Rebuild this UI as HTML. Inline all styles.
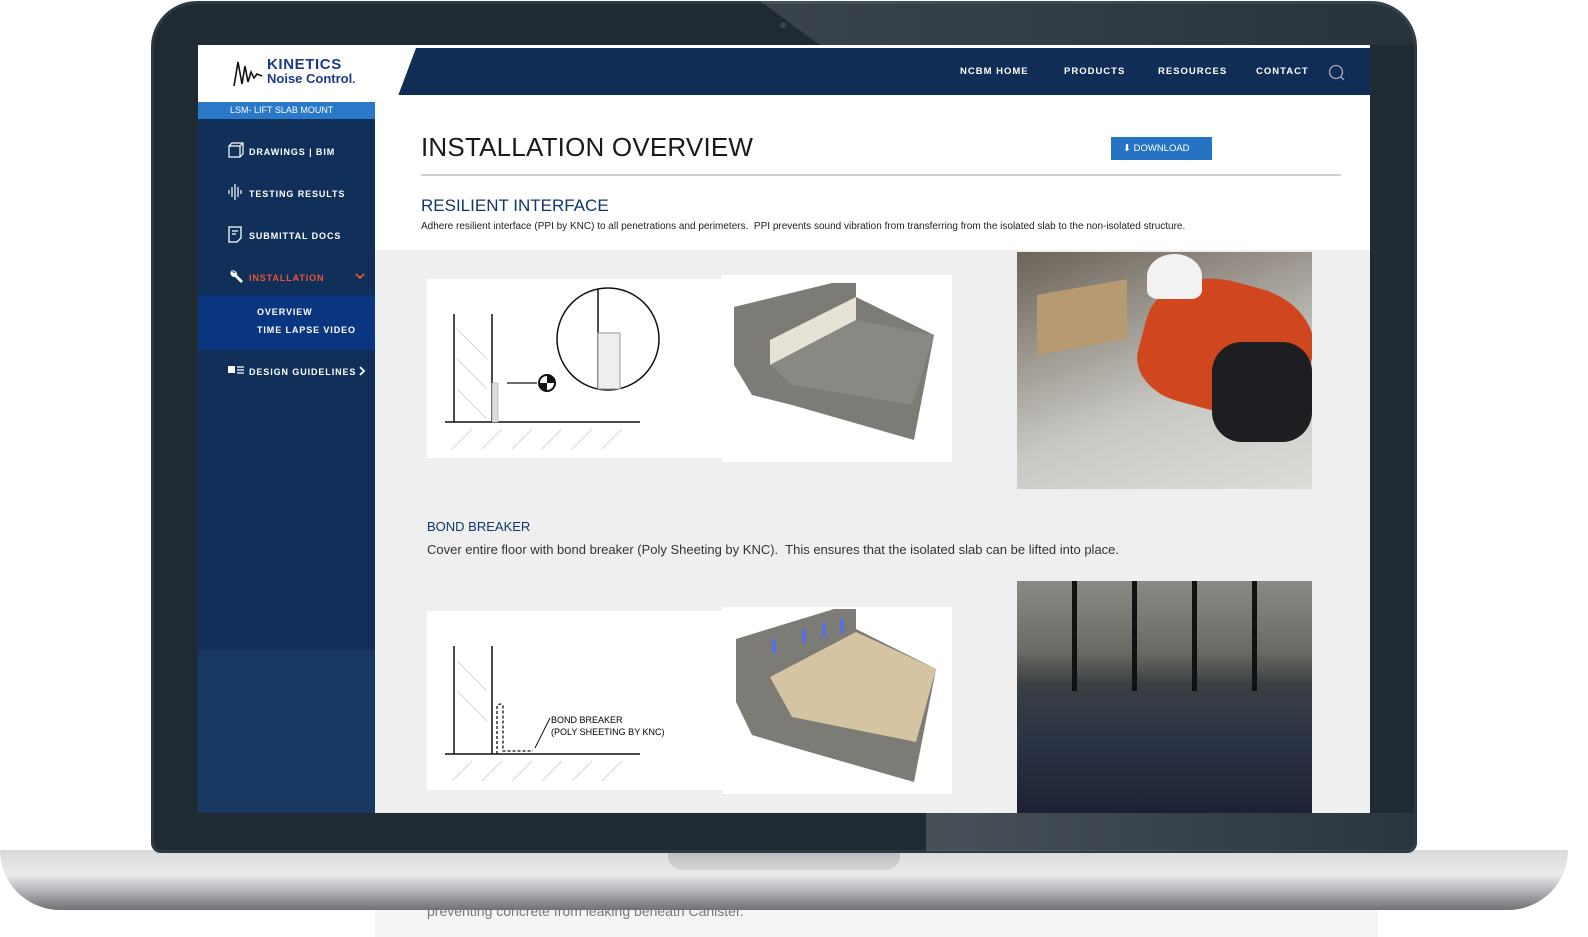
<!DOCTYPE html>
<html><head><meta charset="utf-8"><style>
*{margin:0;padding:0;box-sizing:border-box}
body{width:1588px;height:937px;background:#fff;position:relative;overflow:hidden;font-family:"Liberation Sans",sans-serif}
.abs{position:absolute}
.bezel{left:151px;top:1px;width:1266px;height:852px;background:#1f2a33;border-radius:46px 46px 10px 10px;border:3px solid #2d3a46}
.screen{left:198px;top:45px;width:1172px;height:768px;background:#efefef;overflow:hidden}
.nav a{position:absolute;top:21px;color:#fff;font-size:9.5px;font-weight:bold;letter-spacing:1px}
.side{color:#fff;font-size:9px;font-weight:bold;letter-spacing:.9px}
.side div{position:absolute;left:51px}
.ico{position:absolute;left:30px}
</style></head><body>
<div class="abs" style="left:375px;top:895px;width:1003px;height:42px;background:#f4f4f4"></div>
<div class="abs" style="left:427px;top:903px;font-size:14px;color:#777">preventing concrete from leaking beneath Canister.</div>
<div class="abs" style="left:0;top:850px;width:1568px;height:60px;border-radius:0 0 60px 60px;background:linear-gradient(#d9dadc 0%,#e8e9eb 40%,#c4c5c8 60%,#8e9095 85%,#6e7075 100%)"></div>
<div class="abs" style="left:668px;top:850px;width:232px;height:20px;border-radius:0 0 14px 14px;background:linear-gradient(#b8babd,#d5d6d8)"></div>
<div class="abs bezel"></div>
<div class="abs" style="left:780px;top:22px;width:6px;height:6px;border-radius:50%;background:#3a4650"></div>
<div class="abs screen">
  <div class="abs" style="left:0;top:0;width:1172px;height:60px;background:#fff"></div>
  <div class="abs" style="left:0;top:3px;width:1172px;height:48px;background:#0f2d55;clip-path:polygon(218px 0,1172px 0,1172px 48px,200px 48px)"></div>
  <svg class="abs" style="left:34px;top:13px" width="36" height="30"><path d="M2 28 L6 4 L10 26 L13 8 L16 24 L19 14 L22 20 L25 16 L30 18" stroke="#111" stroke-width="1.6" fill="none"/></svg>
  <div class="abs" style="left:69px;top:13px;font-size:15px;font-weight:bold;color:#1a3a8c;letter-spacing:.6px;line-height:14px;border-bottom:0">KINETICS<br><span style="font-size:13px;letter-spacing:0">Noise Control<small>.</small></span></div>
  <div class="nav">
    <a style="left:762px">NCBM HOME</a><a style="left:866px">PRODUCTS</a><a style="left:960px">RESOURCES</a><a style="left:1058px">CONTACT</a>
  </div>
  <svg class="abs" style="left:1130px;top:19px" width="18" height="18"><circle cx="8" cy="8" r="6.5" stroke="#aab" stroke-width="1.3" fill="none"/><path d="M13 13l3 3" stroke="#aab" stroke-width="1.3"/></svg>
  <div class="abs" style="left:0;top:57px;width:188px;height:17px;background:#2a78c8;clip-path:polygon(0 0,188px 0,182px 17px,0 17px);color:#fff;font-size:9px;padding:3px 0 0 32px">LSM- LIFT SLAB MOUNT</div>
  <div class="abs side" style="left:0;top:74px;width:177px;height:694px;background:#10305a">
    <div class="abs" style="left:0;top:531px;width:177px;height:163px;background:#163861"></div>
    <svg class="ico" style="top:23px" width="16" height="16"><path d="M1 4h11v11H1zM1 4l3-3h11v11l-3 3M12 4l3-3" stroke="#fff" fill="none" stroke-width="1.2"/></svg>
    <div style="top:28px">DRAWINGS | BIM</div>
    <svg class="ico" style="top:65px" width="16" height="16"><path d="M1 6v4M4 3v10M7 0v16M10 3v10M13 6v4" stroke="#fff" stroke-width="1.2"/></svg>
    <div style="top:70px">TESTING RESULTS</div>
    <svg class="ico" style="top:107px" width="16" height="17"><path d="M1 1h12v11l-4 4H1zM4 5h6M4 8h4" stroke="#fff" fill="none" stroke-width="1.3"/></svg>
    <div style="top:112px">SUBMITTAL DOCS</div>
    <svg class="ico" style="top:149px" width="16" height="16"><path d="M3 3a4 4 0 0 1 6 4l6 6-2 2-6-6a4 4 0 0 1-4-6l3 2 2-1z" fill="#fff"/></svg>
    <div style="top:154px;color:#e8553a">INSTALLATION</div>
    <svg class="abs" style="left:157px;top:154px" width="10" height="8"><path d="M1 1l4 4 4-4" stroke="#e8553a" stroke-width="1.8" fill="none"/></svg>
    <div class="abs" style="left:0;top:176px;width:177px;height:55px;background:#0a3580"></div>
    <div style="left:59px;top:188px">OVERVIEW</div>
    <div style="left:59px;top:206px">TIME LAPSE VIDEO</div>
    <svg class="ico" style="top:246px" width="18" height="10"><rect x="0" y="1" width="7" height="7" fill="#fff"/><path d="M9 2h7M9 5h7M9 8h7" stroke="#fff" stroke-width="1.2"/></svg>
    <div style="top:248px">DESIGN GUIDELINES</div>
    <svg class="abs" style="left:161px;top:247px" width="8" height="10"><path d="M1 1l4 4-4 4" stroke="#fff" stroke-width="1.8" fill="none"/></svg>
  </div>
  <div class="abs" style="left:177px;top:50px;width:995px;height:155px;background:#fff"></div>
  <div class="abs" style="left:223px;top:87px;font-size:26px;color:#1a1a1a;letter-spacing:.2px">INSTALLATION OVERVIEW</div>
  <div class="abs" style="left:913px;top:92px;width:101px;height:23px;background:#2673c4;color:#fff;font-size:9.5px;padding:6px 0 0 12px">⬇ DOWNLOAD</div>
  <div class="abs" style="left:223px;top:129px;width:920px;height:2px;background:#cfcfcf"></div>
  <div class="abs" style="left:223px;top:151px;font-size:17px;color:#12356b">RESILIENT INTERFACE</div>
  <div class="abs" style="left:223px;top:176px;font-size:10px;color:#222">Adhere resilient interface (PPI by KNC) to all penetrations and perimeters.&nbsp; PPI prevents sound vibration from transferring from the isolated slab to the non-isolated structure.</div>
  <div class="abs" style="left:229px;top:234px;width:295px;height:179px;background:#fff">
    <svg width="295" height="179"><path d="M27 35V143M65 35V143M18 143H213" stroke="#111" stroke-width="1.5"/><rect x="65" y="104" width="6" height="39" fill="#ddd" stroke="#999" stroke-width=".5"/><path d="M80 104h30" stroke="#111" stroke-width="1.3"/><circle cx="120" cy="104" r="8" fill="#fff" stroke="#111" stroke-width="2"/><path d="M120 96v8h-8a8 8 0 0 0 8 8zM120 104h8a8 8 0 0 0-8-8z" fill="#111"/><circle cx="181" cy="60" r="51" fill="none" stroke="#111" stroke-width="1.5"/><path d="M171 10V110" stroke="#111" stroke-width="1.5"/><rect x="171" y="54" width="22" height="56" fill="#eee" stroke="#999"/><g stroke="#ccc" stroke-width=".8"><path d="M30 50l30 30M30 80l30 30M30 110l30 30M25 170l20-20M55 170l20-20M85 170l20-20M115 170l20-20M145 170l20-20M175 170l20-20"/></g></svg>
  </div>
  <div class="abs" style="left:524px;top:230px;width:230px;height:187px;background:#fff">
    <svg width="230" height="187"><polygon points="12,32 110,8 134,8 134,22 212,60 192,165 70,130 30,120 12,90" fill="#7d7b76"/><polygon points="48,65 134,22 134,45 48,90" fill="#e6e2d6"/><polygon points="48,90 134,45 212,60 190,130 70,110" fill="#8a8883"/></svg>
  </div>
  <div class="abs" style="left:819px;top:207px;width:295px;height:237px;background:linear-gradient(160deg,#6b6258 0%,#9a948c 30%,#c8c8c4 60%,#dcdcd8 100%);overflow:hidden">
    <div class="abs" style="left:20px;top:35px;width:90px;height:60px;background:#b89a72;transform:skewY(-10deg)"></div>
    <div class="abs" style="left:125px;top:30px;width:170px;height:130px;border-radius:45% 40% 20% 30%;background:#d0461f;transform:rotate(15deg)"></div>
    <div class="abs" style="left:195px;top:90px;width:100px;height:100px;border-radius:30%;background:#1e1e22"></div>
    <div class="abs" style="left:130px;top:2px;width:55px;height:45px;border-radius:50% 50% 20% 20%;background:#f2f2f2"></div>
  </div>
  <div class="abs" style="left:229px;top:474px;font-size:13px;color:#12356b">BOND BREAKER</div>
  <div class="abs" style="left:229px;top:497px;font-size:13px;color:#333">Cover entire floor with bond breaker (Poly Sheeting by KNC).&nbsp; This ensures that the isolated slab can be lifted into place.</div>
  <div class="abs" style="left:229px;top:566px;width:295px;height:179px;background:#fff">
    <svg width="295" height="179"><path d="M27 35V143M65 35V143M18 143H213" stroke="#111" stroke-width="1.5"/><path d="M70 143V95q4-4 6 0V140h30" stroke="#111" stroke-dasharray="3 2" fill="none" stroke-width="1.3"/><path d="M123 107l-15 30" stroke="#111"/><text x="124" y="112" font-size="9" font-family="Liberation Sans">BOND BREAKER</text><text x="124" y="124" font-size="9" font-family="Liberation Sans">(POLY SHEETING BY KNC)</text><g stroke="#ccc" stroke-width=".8"><path d="M30 50l30 30M30 80l30 30M25 170l20-20M55 170l20-20M85 170l20-20M115 170l20-20M145 170l20-20M175 170l20-20"/></g></svg>
  </div>
  <div class="abs" style="left:524px;top:562px;width:230px;height:187px;background:#fff">
    <svg width="230" height="187"><polygon points="14,32 112,2 134,2 134,22 214,62 192,175 70,140 30,128 14,95" fill="#7d7b76"/><polygon points="48,70 134,25 214,62 194,135 70,110" fill="#d4c4a2"/><g fill="#5a6ee0"><rect x="50" y="32" width="4" height="14"/><rect x="80" y="22" width="4" height="14"/><rect x="100" y="16" width="4" height="14"/><rect x="118" y="12" width="4" height="14"/></g></svg>
  </div>
  <div class="abs" style="left:819px;top:536px;width:295px;height:232px;background:linear-gradient(#8a8a84 0%,#6c6a64 30%,#3a3f44 45%,#2a3245 70%,#1c2233 100%)">
    <div class="abs" style="left:0;top:0;width:295px;height:110px;background:repeating-linear-gradient(90deg,transparent 0,transparent 55px,#111 55px,#111 60px)"></div>
  </div>
</div>
<div class="abs" style="left:760px;top:1px;width:655px;height:44px;background:linear-gradient(90deg,rgba(255,255,255,.12),rgba(255,255,255,.04));clip-path:polygon(0 0,100% 0,100% 100%,60px 100%);border-radius:0 46px 0 0"></div>
<div class="abs" style="left:926px;top:813px;width:488px;height:38px;background:linear-gradient(90deg,rgba(255,255,255,.18),rgba(255,255,255,.05))"></div>
</body></html>
